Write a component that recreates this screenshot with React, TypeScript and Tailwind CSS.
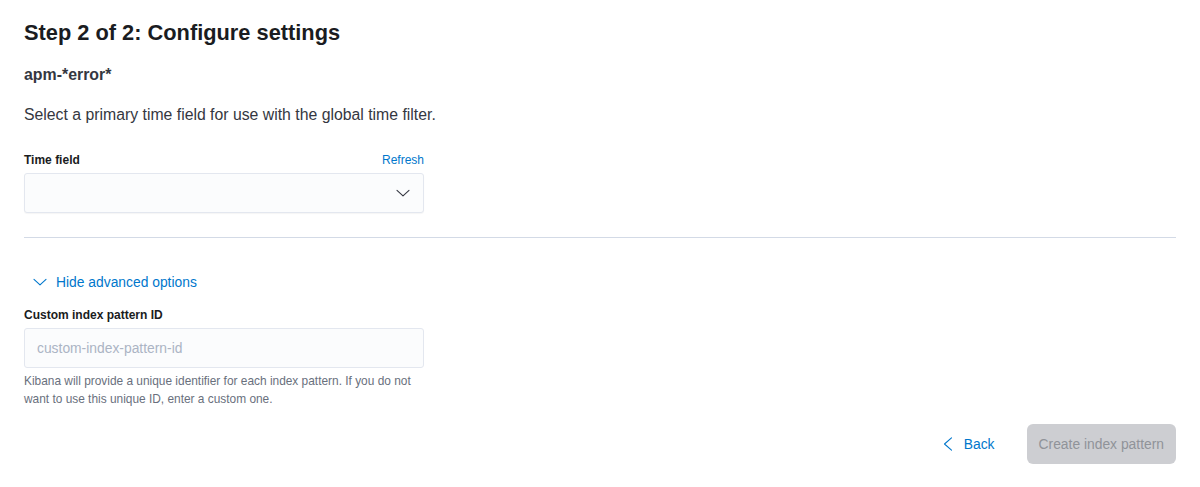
const font = { fontFamily: '"Liberation Sans", Arial, sans-serif' };

function ArrowDown({ className }: { className?: string }) {
  return (
    <svg viewBox="0 0 16 16" className={className} fill="none" stroke="currentColor" strokeWidth={1.1} strokeLinecap="round" strokeLinejoin="round">
      <polyline points="2,5.3 8,10.8 14,5.3" />
    </svg>
  );
}

function ArrowLeft({ className }: { className?: string }) {
  return (
    <svg viewBox="0 0 16 16" className={className} fill="none" stroke="currentColor" strokeWidth={1.1} strokeLinecap="round" strokeLinejoin="round">
      <polyline points="11.5,1.8 4.5,8 11.5,14.2" />
    </svg>
  );
}

export default function App() {
  return (
    <div className="min-h-[487px] bg-white px-6 pt-[19px]" style={font}>
      <h2 className="text-[21.8px] leading-[28px] font-bold text-[#1a1c21]">
        Step 2 of 2: Configure settings
      </h2>

      <h3 className="mt-4 text-[15.9px] leading-6 font-bold text-[#343741]">apm-*error*</h3>

      <p className="mt-4 text-[15.8px] leading-6 text-[#343741]">
        Select a primary time field for use with the global time filter.
      </p>

      <div className="mt-6 w-[400px]">
        <div className="flex items-center justify-between">
          <label className="text-xs leading-[18px] font-bold text-[#1a1c21]">Time field</label>
          <button type="button" className="text-xs leading-[18px] text-[#0077cc]">
            Refresh
          </button>
        </div>
        <div className="mt-1 flex h-10 items-center justify-end rounded-[3px] border border-[#e3e7ef] bg-[#fbfcfd] pr-3 shadow-[0_1px_1px_rgba(0,0,0,0.04)]">
          <ArrowDown className="h-4 w-4 text-[#343741]" />
        </div>
      </div>

      <hr className="mt-6 border-0 border-t border-[#d3dae6]" />

      <button
        type="button"
        className="mt-[34px] flex items-center gap-2 pl-2 text-[13.85px] leading-5 text-[#0077cc]"
      >
        <ArrowDown className="h-4 w-4" />
        Hide advanced options
      </button>

      <div className="mt-[14px] w-[400px]">
        <label className="block text-xs leading-[18px] font-bold text-[#1a1c21]">
          Custom index pattern ID
        </label>
        <input
          className="mt-1 h-10 w-full rounded-[3px] border border-[#e3e7ef] bg-[#fbfcfd] px-3 text-[13.85px] text-[#343741] outline-none placeholder:text-[#abb4c4]"
          placeholder="custom-index-pattern-id"
          style={font}
        />
        <p className="mt-1 text-[11.9px] leading-[18px] text-[#69707d]">
          Kibana will provide a unique identifier for each index pattern. If you do not want to use
          this unique ID, enter a custom one.
        </p>
      </div>

      <div className="mt-4 flex items-center justify-end gap-8">
        <button type="button" className="flex items-center gap-2 text-[13.85px] text-[#0077cc]">
          <ArrowLeft className="h-4 w-4" />
          Back
        </button>
        <button
          type="button"
          disabled
          className="h-10 rounded-md bg-[#cdced2] px-3 text-[13.85px] text-[#909399]"
        >
          Create index pattern
        </button>
      </div>
    </div>
  );
}
